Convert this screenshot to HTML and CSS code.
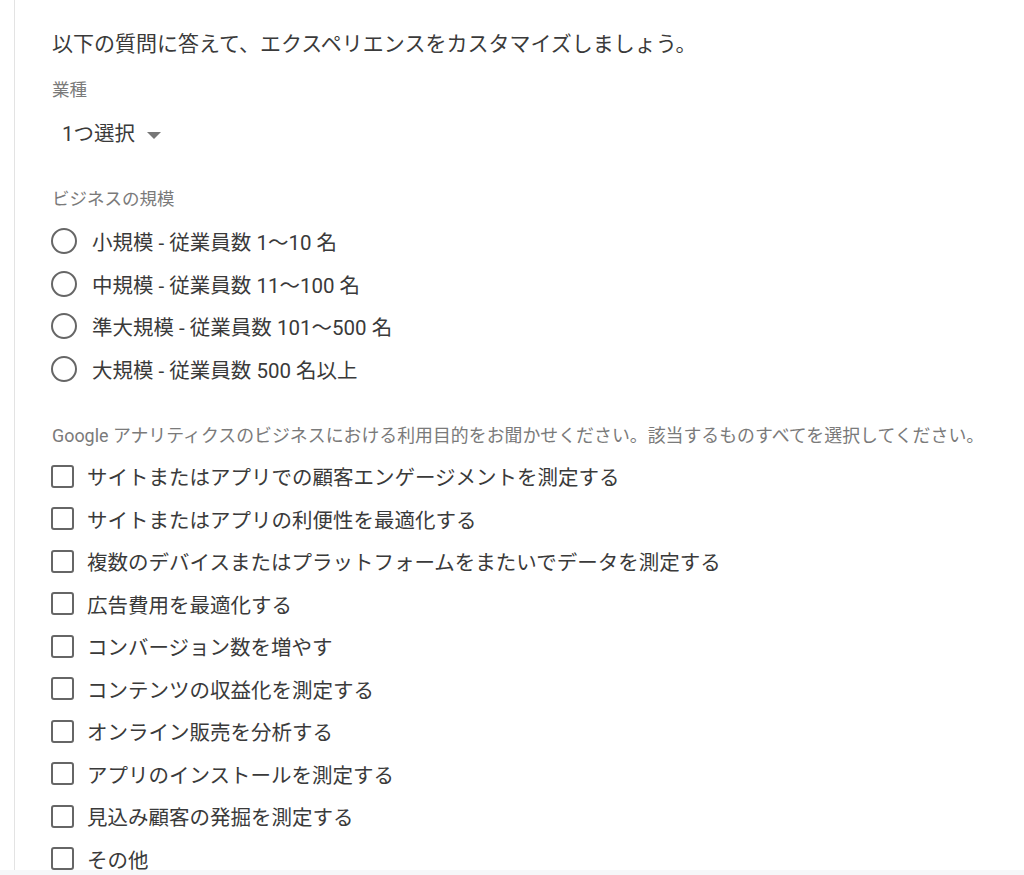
FILE: index.html
```html
<!DOCTYPE html>
<html lang="ja">
<head>
    <meta charset="UTF-8">
    <meta name="viewport" content="width=device-width, initial-scale=1.0">
    <title>アカウントの設定</title>
    <link rel="stylesheet" href="styles.css">
</head>
<body>
    <div class="page">
        <div class="panel">
            <div class="intro">以下の質問に答えて、エクスペリエンスをカスタマイズしましょう。</div>

            <div class="label first">業種</div>
            <div class="select">1つ選択<span class="caret"></span></div>

            <div class="label size">ビジネスの規模</div>
            <div class="options">
                <label class="row"><span class="radio"></span>小規模 - 従業員数 1～10 名</label>
                <label class="row"><span class="radio"></span>中規模 - 従業員数 11～100 名</label>
                <label class="row"><span class="radio"></span>準大規模 - 従業員数 101～500 名</label>
                <label class="row"><span class="radio"></span>大規模 - 従業員数 500 名以上</label>
            </div>

            <div class="label goals">Google アナリティクスのビジネスにおける利用目的をお聞かせください。該当するものすべてを選択してください。</div>
            <div class="options checks">
                <label class="row"><span class="box"></span>サイトまたはアプリでの顧客エンゲージメントを測定する</label>
                <label class="row"><span class="box"></span>サイトまたはアプリの利便性を最適化する</label>
                <label class="row"><span class="box"></span>複数のデバイスまたはプラットフォームをまたいでデータを測定する</label>
                <label class="row"><span class="box"></span>広告費用を最適化する</label>
                <label class="row"><span class="box"></span>コンバージョン数を増やす</label>
                <label class="row"><span class="box"></span>コンテンツの収益化を測定する</label>
                <label class="row"><span class="box"></span>オンライン販売を分析する</label>
                <label class="row"><span class="box"></span>アプリのインストールを測定する</label>
                <label class="row"><span class="box"></span>見込み顧客の発掘を測定する</label>
                <label class="row"><span class="box"></span>その他</label>
            </div>
        </div>
    </div>
    <div class="bottom"></div>
</body>
</html>
```

FILE: styles.css
```css
* {
    margin: 0;
    padding: 0;
    box-sizing: border-box;
}
body {
    height: 100vh;
    display: flex;
    flex-direction: column;
    overflow: hidden;
    background-color: #fff;
    font-family: Roboto, "Noto Sans CJK JP", sans-serif;
    color: #3a3a3a;
}
.page {
    flex: 1;
    overflow: hidden;
    padding-left: 14px;
}
.panel {
    height: 100%;
    border-left: 1px solid #e3e3e3;
    padding: 29px 0 0 37px;
}
.intro {
    font-size: 21px;
    line-height: 30px;
    white-space: nowrap;
}
.label {
    font-size: 17.5px;
    line-height: 24px;
    color: #7a7a7a;
    white-space: nowrap;
}
.label.first {
    margin-top: 19px;
}
.select {
    display: flex;
    align-items: center;
    margin-top: 17px;
    padding-left: 10px;
    font-size: 20.5px;
    line-height: 30px;
}
.caret {
    width: 0;
    height: 0;
    margin-left: 12px;
    margin-top: 2px;
    border-left: 7px solid transparent;
    border-right: 7px solid transparent;
    border-top: 7px solid #777;
}
.label.size {
    margin-top: 38px;
}
.options {
    margin-top: 9px;
    display: flex;
    flex-direction: column;
}
.row {
    display: flex;
    align-items: center;
    height: 42.5px;
    font-size: 20.5px;
    white-space: nowrap;
}
.radio {
    width: 26px;
    height: 26px;
    border: 2.7px solid #666;
    border-radius: 50%;
    margin: 0 15px 0 -1px;
    flex-shrink: 0;
}
.label.goals {
    margin-top: 34px;
    font-size: 17.9px;
}
.options.checks {
    margin-top: 7px;
}
.box {
    width: 23px;
    height: 23px;
    border: 2.7px solid #666;
    border-radius: 3px;
    margin: 0 13px 0 -1px;
    flex-shrink: 0;
}
.bottom {
    height: 5px;
    background-color: #f6f7f9;
    flex-shrink: 0;
}
```
